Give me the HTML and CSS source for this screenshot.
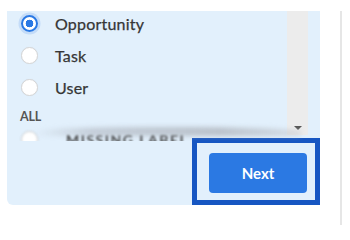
FILE: index.html
```html
<!DOCTYPE html>
<html>
<head>
<meta charset="utf-8">
<link rel="stylesheet" href="styles.css">
</head>
<body>
<div class="page">
  <div class="panel">
    <div class="list">
      <div class="items">
        <label class="row"><span class="radio checked"></span><span class="label">Opportunity</span></label>
        <label class="row"><span class="radio"></span><span class="label">Task</span></label>
        <label class="row"><span class="radio"></span><span class="label">User</span></label>
        <div class="group">ALL</div>
        <label class="row faded"><span class="radio"></span><span class="label caps">MISSING LABEL</span></label>
        <div class="shade"></div>
      </div>
      <div class="scrollbar"><span class="arrow"></span></div>
    </div>
    <div class="footer">
      <div class="highlight">
        <button class="next">Next</button>
      </div>
    </div>
  </div>
  <div class="divider"></div>
</div>
</body>
</html>
```
FILE: styles.css
```css
html, body {
  margin: 0;
  padding: 0;
  background: #ffffff;
  width: 350px;
  height: 234px;
  overflow: hidden;
  font-family: Lato, "Open Sans", "Liberation Sans", sans-serif;
}

.page {
  display: flex;
  padding: 11px 0 0 7px;
}

.panel {
  width: 313px;
  height: 194px;
  background: #e2f0fc;
  border-radius: 0 0 6px 6px;
  display: flex;
  flex-direction: column;
}

.list {
  height: 130px;
  display: flex;
  overflow: hidden;
}

.items {
  flex: 1;
  position: relative;
  padding-left: 14px;
}

.row {
  display: flex;
  align-items: center;
  height: 24px;
  margin-bottom: 8px;
}

.radio {
  width: 17px;
  height: 17px;
  border-radius: 50%;
  background: #ffffff;
  border: 1px solid #d6d6d6;
  box-shadow: 0 0 1px rgba(0, 0, 0, 0.08);
  box-sizing: border-box;
  flex: none;
}

.radio.checked {
  border: 2.5px solid #2a79e4;
  background: radial-gradient(circle, #2a79e4 0 3.6px, #ffffff 4.1px);
  box-shadow: 0 0 0 2.5px rgba(42, 121, 228, 0.16);
}

.label {
  margin-left: 17px;
  font-size: 16px;
  color: #363636;
  letter-spacing: 0.2px;
  -webkit-text-stroke: 0.25px #363636;
}

.group {
  font-size: 12.5px;
  font-weight: 700;
  color: #555555;
  margin: 3px 0 0 -1px;
  height: 20px;
  line-height: 20px;
  letter-spacing: -0.2px;
}

.faded {
  margin-top: 0;
  filter: blur(0.9px);
}

.faded .radio {
  border-color: #cfcfcf;
}

.faded .label {
  font-size: 14px;
  font-weight: 700;
  letter-spacing: 1.5px;
  margin-left: 28px;
  color: #3a3a3a;
  -webkit-text-stroke: 0;
}

.shade {
  position: absolute;
  left: 26px;
  right: -14px;
  bottom: 5px;
  height: 9px;
  background: linear-gradient(90deg, rgba(226,240,252,0) 0%, rgba(178,185,195,0.65) 22%, rgba(168,173,181,0.7) 70%, rgba(200,205,212,0.55) 100%);
  filter: blur(2.5px);
  border-radius: 50% 50% 0 0;
}

.scrollbar {
  width: 21px;
  height: 124px;
  margin-right: 12px;
  background: #ececec;
  display: flex;
  justify-content: center;
  align-items: flex-end;
  flex: none;
}

.arrow {
  width: 0;
  height: 0;
  border-left: 4px solid transparent;
  border-right: 4px solid transparent;
  border-top: 4px solid #555;
  margin-bottom: 5px;
}

.footer {
  flex: 1;
  display: flex;
  justify-content: flex-end;
  align-items: flex-end;
}

.highlight {
  width: 128px;
  height: 67px;
  box-sizing: border-box;
  border: 5px solid #1656c2;
  margin-top: -3px;
  padding: 10px 8px 7px 12px;
  display: flex;
}

.next {
  flex: 1;
  border: none;
  border-radius: 4px;
  background: #2b79e3;
  color: #ffffff;
  font-family: Lato, "Open Sans", "Liberation Sans", sans-serif;
  font-size: 15px;
  font-weight: 700;
  padding: 0;
}

.divider {
  width: 2px;
  height: 214px;
  background: #e6e6e6;
  margin-left: 20px;
}
```
